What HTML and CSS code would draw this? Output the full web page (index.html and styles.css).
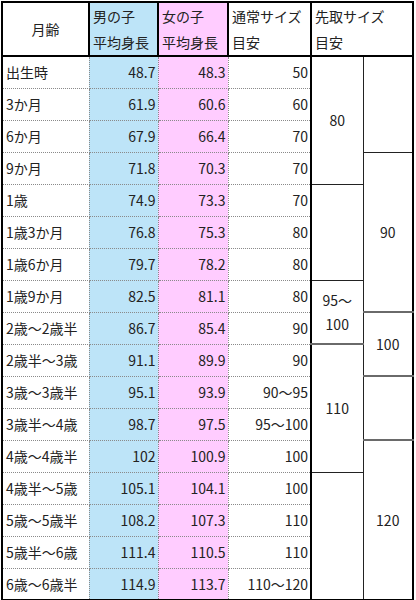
FILE: index.html
```html
<!DOCTYPE html>
<html lang="ja">
<head>
    <meta charset="UTF-8">
    <meta name="viewport" content="width=device-width, initial-scale=1.0">
    <title>月齢別 平均身長とサイズ目安</title>
    <link rel="stylesheet" href="styles.css">
</head>
<body>
    <table class="size-table">
        <colgroup>
            <col class="w-age">
            <col class="w-boy">
            <col class="w-girl">
            <col class="w-size">
            <col class="w-pre">
            <col class="w-pre2">
        </colgroup>
        <thead>
            <tr>
                <th class="age-head">月齢</th>
                <th class="boy">男の子<br>平均身長</th>
                <th class="girl">女の子<br>平均身長</th>
                <th>通常サイズ<br>目安</th>
                <th colspan="2">先取サイズ<br>目安</th>
            </tr>
        </thead>
        <tbody>
            <tr>
                <td class="age">出生時</td><td class="num boy">48.7</td><td class="num girl">48.3</td><td class="num size">50</td>
                <td class="pre" rowspan="4">80</td><td class="pre" rowspan="3"></td>
            </tr>
            <tr>
                <td class="age">3か月</td><td class="num boy">61.9</td><td class="num girl">60.6</td><td class="num size">60</td>
            </tr>
            <tr>
                <td class="age">6か月</td><td class="num boy">67.9</td><td class="num girl">66.4</td><td class="num size">70</td>
            </tr>
            <tr>
                <td class="age">9か月</td><td class="num boy">71.8</td><td class="num girl">70.3</td><td class="num size">70</td>
                <td class="pre" rowspan="5">90</td>
            </tr>
            <tr>
                <td class="age">1歳</td><td class="num boy">74.9</td><td class="num girl">73.3</td><td class="num size">70</td>
                <td class="pre" rowspan="3"></td>
            </tr>
            <tr>
                <td class="age">1歳3か月</td><td class="num boy">76.8</td><td class="num girl">75.3</td><td class="num size">80</td>
            </tr>
            <tr>
                <td class="age">1歳6か月</td><td class="num boy">79.7</td><td class="num girl">78.2</td><td class="num size">80</td>
            </tr>
            <tr>
                <td class="age">1歳9か月</td><td class="num boy">82.5</td><td class="num girl">81.1</td><td class="num size">80</td>
                <td class="pre wrap grey-b" rowspan="2">95～<br>100</td>
            </tr>
            <tr>
                <td class="age">2歳～2歳半</td><td class="num boy">86.7</td><td class="num girl">85.4</td><td class="num size">90</td>
                <td class="pre grey-t" rowspan="2">100</td>
            </tr>
            <tr>
                <td class="age">2歳半～3歳</td><td class="num boy">91.1</td><td class="num girl">89.9</td><td class="num size">90</td>
                <td class="pre" rowspan="4">110</td>
            </tr>
            <tr>
                <td class="age">3歳～3歳半</td><td class="num boy">95.1</td><td class="num girl">93.9</td><td class="num size">90～95</td>
                <td class="pre grey-t grey-b" rowspan="2"></td>
            </tr>
            <tr>
                <td class="age">3歳半～4歳</td><td class="num boy">98.7</td><td class="num girl">97.5</td><td class="num size">95～100</td>
            </tr>
            <tr>
                <td class="age">4歳～4歳半</td><td class="num boy">102</td><td class="num girl">100.9</td><td class="num size">100</td>
                <td class="pre" rowspan="5">120</td>
            </tr>
            <tr>
                <td class="age">4歳半～5歳</td><td class="num boy">105.1</td><td class="num girl">104.1</td><td class="num size">100</td>
                <td class="pre" rowspan="4"></td>
            </tr>
            <tr>
                <td class="age">5歳～5歳半</td><td class="num boy">108.2</td><td class="num girl">107.3</td><td class="num size">110</td>
            </tr>
            <tr>
                <td class="age">5歳半～6歳</td><td class="num boy">111.4</td><td class="num girl">110.5</td><td class="num size">110</td>
            </tr>
            <tr>
                <td class="age">6歳～6歳半</td><td class="num boy">114.9</td><td class="num girl">113.7</td><td class="num size">110～120</td>
            </tr>
        </tbody>
    </table>
</body>
</html>
```

FILE: styles.css
```css
body {
    margin: 0;
    padding: 0;
    background-color: #fff;
    font-family: "Noto Sans CJK JP", "Noto Sans", sans-serif;
    font-size: 14px;
    color: #222;
}

.size-table {
    margin: 1px 0 0 1px;
    border-collapse: collapse;
    table-layout: fixed;
    width: 413px;
    border: 2px solid #000;
}

.w-age { width: 87px; }
.w-boy { width: 69px; }
.w-girl { width: 70px; }
.w-size { width: 83px; }
.w-pre { width: 52px; }
.w-pre2 { width: 50px; }

th {
    height: 51px;
    padding: 0 3px;
    border: 2px solid #000;
    font-weight: normal;
    text-align: left;
    vertical-align: middle;
    line-height: 26px;
    white-space: nowrap;
}

.age-head {
    text-align: center;
}

tbody tr {
    height: 32px;
}

td {
    padding: 0 2px 0 3px;
    border: 1px dotted #8a8a8a;
    line-height: 20px;
    vertical-align: middle;
    white-space: nowrap;
}

.boy {
    background-color: #bde4f8;
}

.girl {
    background-color: #ffccff;
}

.num {
    text-align: right;
}

.size {
    border-right: 2px solid #000;
}

.pre {
    padding: 0;
    border: 1px solid #222;
    text-align: center;
}

.wrap {
    line-height: 24px;
}

.grey-t {
    border-top: 2px solid #6a6a6a;
}

.grey-b {
    border-bottom: 2px solid #6a6a6a;
}
```
